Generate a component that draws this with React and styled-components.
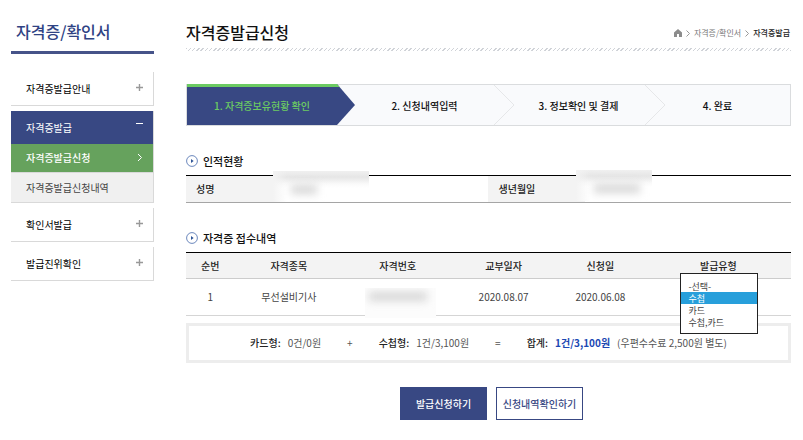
import styled, { createGlobalStyle } from 'styled-components';
import { useState } from "react"

const GlobalStyle = createGlobalStyle`
    * {
        box-sizing: border-box;
    }
    body {
        margin: 0;
        background: #fff;
        color: #222;
        font-family: "Noto Sans CJK KR", "Noto Sans", sans-serif;
        font-size: 10px;
        line-height: 16px;
    }
    button, select {
        font-family: inherit;
    }
    a {
        color: inherit;
        text-decoration: none;
    }
`

const Page = styled.div`
    display: flex;
    align-items: flex-start;
    gap: 32px;
    padding: 16px 12px 20px 11px;
`

const Sidebar = styled.aside`
    flex: 0 0 143px;
`

const SideTitle = styled.h2`
    margin: 0 0 18px;
    padding: 0 5px 5px;
    font-size: 16px;
    font-weight: 500;
    line-height: 30px;
    color: #2f4384;
    border-bottom: 3px solid #465389;
`

const Menu = styled.ul`
    display: grid;
    gap: 5px;
    margin: 0;
    padding: 0;
    list-style: none;
`

const MenuLink = styled.a`
    display: flex;
    align-items: center;
    justify-content: space-between;
    height: ${({ $active }) => $active ? '33px' : '34px'};
    padding: 0 10px 0 15px;
    color: ${({ $active }) => $active ? '#fff' : '#000'};
    background: ${({ $active }) => $active ? '#384883' : '#fff'};
    border-right: 1px solid #d9d9d9;
    border-bottom: ${({ $active }) => $active ? '0' : '1px solid #d9d9d9'};
`

const MenuIcon = styled.svg`
    display: block;
    width: 7px;
    height: 7px;
    margin-bottom: ${({ $high }) => $high ? '8px' : '2px'};
    fill: none;
    stroke: ${({ $color }) => $color};
    stroke-width: ${({ $thick }) => $thick ? '1.4' : '1'};
`

const SubLink = styled.a`
    display: flex;
    align-items: center;
    justify-content: space-between;
    height: ${({ $active }) => $active ? '28px' : '31px'};
    padding: 0 10px 0 15px;
    font-weight: ${({ $active }) => $active ? 500 : 400};
    color: ${({ $active }) => $active ? '#fff' : '#444'};
    background: ${({ $active }) => $active ? '#66a25d' : '#f0f0f0'};
    border: 0 solid #d9d9d9;
    border-width: ${({ $active }) => $active ? '0 1px 0 0' : '1px 1px 1px 0'};
`

const Main = styled.main`
    flex: 1;
    min-width: 0;
`

const Header = styled.header`
    display: flex;
    align-items: center;
    justify-content: space-between;
    height: 32px;
`

const Title = styled.h1`
    margin: 0;
    font-size: 16px;
    font-weight: 500;
    line-height: 32px;
    color: #111;
`

const Breadcrumb = styled.nav`
    display: flex;
    align-items: center;
    gap: 4px;
    padding: 2px 1px 0 0;
    font-size: 8px;
    color: #777;
    svg {
        display: block;
    }
    strong {
        font-weight: 500;
        color: #222;
    }
`

const Hatch = styled.div`
    height: 3px;
    margin-bottom: 33px;
    background: repeating-linear-gradient(135deg, #d0d3d8 0 1px, #fff 1px 3px);
`

const Steps = styled.ol`
    display: grid;
    grid-template-columns: 150fr 157fr 151fr 145fr;
    height: 42px;
    margin: 0 0 27px;
    padding: 0;
    list-style: none;
    background: #f9fafc;
    border: 1px solid #dadcde;
`

const Step = styled.li`
    position: relative;
    display: flex;
    align-items: center;
    justify-content: center;
    padding-top: 2px;
    padding-left: ${({ $inset }) => $inset ? '18px' : '0'};
    font-weight: 500;
    color: #111;
    ${({ $active }) => $active && `
        margin-top: -1px;
        color: #6ccb62;
        background: #384883;
        border-top: 3px solid #6ccb62;
        padding-top: 0;
    `}
`

const StepArrow = styled.svg`
    position: absolute;
    top: ${({ $active }) => $active ? '-3px' : '0'};
    left: 100%;
`

const SectionTitle = styled.h3`
    display: flex;
    align-items: center;
    gap: 5px;
    margin: 0 0 6px;
    font-size: 11px;
    font-weight: 500;
    line-height: 16px;
    color: #111;
`

const InfoTable = styled.table`
    width: 100%;
    table-layout: fixed;
    border-collapse: separate;
    border-spacing: 0;
    border-top: 1px solid #000;
    border-bottom: 1px solid #a5a5a5;
    margin-bottom: 27px;
    th, td {
        position: relative;
        height: 26px;
        padding: 0 10px;
        text-align: left;
    }
    th {
        font-weight: 500;
        color: #222;
        background: #f3f3f3;
    }
`

const ListTable = styled.table`
    width: 100%;
    table-layout: fixed;
    border-collapse: separate;
    border-spacing: 0;
    border-top: 1px solid #000;
    margin-bottom: 7px;
    text-align: center;
    th {
        height: 26px;
        padding: 0;
        font-weight: 500;
        color: #222;
        background: #f3f3f3;
        border-bottom: 1px solid #ccc;
    }
    td {
        position: relative;
        height: 37px;
        padding: 0;
        color: #444;
        border-bottom: 1px solid #d5d5d5;
    }
`

// masked personal data
const Mask = styled.span`
    position: absolute;
    top: ${({ $top }) => $top}px;
    left: ${({ $left }) => $left}px;
    width: ${({ $width }) => $width}px;
    height: ${({ $plain }) => $plain ? 30 : 31}px;
    background: ${({ $plain }) => $plain
        ? '#fcfcfc'
        : `linear-gradient(90deg, #f3f3f3, #f3f3f300 14px),
            linear-gradient(#f0f0f0, #e6e6e6 6px, #eee 9px, #fafafa 13px, #fff 17px)`};
    overflow: hidden;
    &::after {
        content: "";
        position: absolute;
        top: ${({ $plain }) => $plain ? 4 : 14}px;
        left: ${({ $blobLeft }) => $blobLeft}px;
        width: ${({ $blob }) => $blob}px;
        height: 9px;
        background: #d6d6d6;
        filter: blur(4px);
    }
`

const TypeSelect = styled.select`
    position: absolute;
    z-index: 1;
    top: -6px;
    left: 50%;
    width: 78px;
    height: 61px;
    margin: 0 0 0 -38px;
    padding: 6px 0 5px;
    font-size: 9px;
    color: #444;
    background: #fff;
    border: 1px solid #222;
    border-radius: 0;
    outline: 0;
    overflow: hidden;
    option {
        height: 12px;
        min-height: 12px;
        padding: 0 7px;
        line-height: 12px;
        text-align: left;
    }
    option:checked {
        background: linear-gradient(#279fdb, #279fdb);
        -webkit-text-fill-color: #fff;
    }
`

const Summary = styled.div`
    display: flex;
    align-items: center;
    justify-content: center;
    gap: 26px;
    height: 40px;
    margin-bottom: 24px;
    border: 3px solid #ededed;
    color: #555;
    white-space: nowrap;
`

const Amount = styled.span`
    display: flex;
    gap: 7px;
    b {
        font-weight: 500;
        color: #222;
    }
    strong {
        font-weight: 700;
        color: #1b48b3;
    }
`

const Actions = styled.div`
    display: flex;
    justify-content: center;
    gap: 9px;
    padding-left: 6px;
`

const Button = styled.button`
    width: 87px;
    height: 33px;
    padding: 0;
    font-size: 10px;
    font-weight: 500;
    line-height: 16px;
    color: ${({ $primary }) => $primary ? '#fff' : '#384883'};
    background: ${({ $primary }) => $primary ? '#384883' : '#fff'};
    border: 1px solid #384883;
    cursor: pointer;
`

const Plus = () => (
    <MenuIcon viewBox="0 0 7 7" $color="#999" $thick>
        <path d="M3.5 0v7M0 3.5h7" />
    </MenuIcon>
)

const Chevron = () => (
    <svg width="4" height="7" viewBox="0 0 4 7" fill="none" stroke="#999">
        <path d="M.5 .5l3 3-3 3" />
    </svg>
)

const Bullet = () => (
    <svg width="12" height="12" viewBox="0 0 12 12">
        <circle cx="6" cy="6" r="5.4" fill="none" stroke="#5b7ab5" strokeWidth=".9" />
        <path d="M5 4l2.6 2L5 8z" fill="#2f5597" />
    </svg>
)

const NextArrow = () => (
    <StepArrow width="21" height="40" viewBox="0 0 21 40" fill="none" stroke="#e6e7e9">
        <path d="M0 0l20 20L0 40" />
    </StepArrow>
)

const App = () => {
    const [tipo, setTipo] = useState('수첩');

    return (
        <>
            <GlobalStyle />
            <Page>
                <Sidebar>
                    <SideTitle>자격증/확인서</SideTitle>
                    <Menu>
                        <li><MenuLink href="#">자격증발급안내<Plus /></MenuLink></li>
                        <li>
                            <MenuLink href="#" $active>
                                자격증발급
                                <MenuIcon viewBox="0 0 7 7" $color="#fff" $high>
                                    <path d="M0 3.5h7" />
                                </MenuIcon>
                            </MenuLink>
                            <SubLink href="#" $active>
                                자격증발급신청
                                <MenuIcon viewBox="0 0 7 7" $color="#fff">
                                    <path d="M2 0l3.5 3.5L2 7" />
                                </MenuIcon>
                            </SubLink>
                            <SubLink href="#">자격증발급신청내역</SubLink>
                        </li>
                        <li><MenuLink href="#">확인서발급<Plus /></MenuLink></li>
                        <li><MenuLink href="#">발급진위확인<Plus /></MenuLink></li>
                    </Menu>
                </Sidebar>

                <Main>
                    <Header>
                        <Title>자격증발급신청</Title>
                        <Breadcrumb>
                            <svg width="8" height="8" viewBox="0 0 8 8">
                                <path d="M4 0l4 3.5V8H5V5H3v3H0V3.5z" fill="#8c8c8c" />
                            </svg>
                            <Chevron />
                            <a href="#">자격증/확인서</a>
                            <Chevron />
                            <strong>자격증발급</strong>
                        </Breadcrumb>
                    </Header>
                    <Hatch />

                    <Steps>
                        <Step $active>
                            1. 자격증보유현황 확인
                            <StepArrow $active width="18" height="41" viewBox="0 0 18 41">
                                <path d="M0 0l18 21L0 41z" fill="#384883" />
                                <path d="M0 0l2.6 3H0z" fill="#6ccb62" />
                            </StepArrow>
                        </Step>
                        <Step $inset>2. 신청내역입력<NextArrow /></Step>
                        <Step $inset>3. 정보확인 및 결제<NextArrow /></Step>
                        <Step>4. 완료</Step>
                    </Steps>

                    <SectionTitle><Bullet />인적현황</SectionTitle>
                    <InfoTable>
                        <colgroup>
                            <col width="16%" />
                            <col width="34%" />
                            <col width="16%" />
                            <col width="34%" />
                        </colgroup>
                        <tbody>
                            <tr>
                                <th scope="row">성명</th>
                                <td><Mask $top={-5} $left={-10} $width={96} $blobLeft={18} $blob={26} /></td>
                                <th scope="row">생년월일</th>
                                <td><Mask $top={-6} $left={-9} $width={76} $blobLeft={18} $blob={46} /></td>
                            </tr>
                        </tbody>
                    </InfoTable>

                    <SectionTitle><Bullet />자격증 접수내역</SectionTitle>
                    <ListTable>
                        <colgroup>
                            <col width="8%" />
                            <col width="18%" />
                            <col width="18%" />
                            <col width="17%" />
                            <col width="15%" />
                            <col width="24%" />
                        </colgroup>
                        <thead>
                            <tr>
                                <th>순번</th>
                                <th>자격종목</th>
                                <th>자격번호</th>
                                <th>교부일자</th>
                                <th>신청일</th>
                                <th>발급유형</th>
                            </tr>
                        </thead>
                        <tbody>
                            <tr>
                                <td>1</td>
                                <td>무선설비기사</td>
                                <td><Mask $plain $top={9} $left={22} $width={71} $blobLeft={4} $blob={58} /></td>
                                <td>2020.08.07</td>
                                <td>2020.06.08</td>
                                <td>
                                    <TypeSelect
                                        size={4}
                                        aria-label="발급유형"
                                        value={tipo}
                                        onChange={(e) => setTipo(e.target.value)}
                                    >
                                        <option value="">-선택-</option>
                                        <option value="수첩">수첩</option>
                                        <option value="카드">카드</option>
                                        <option value="수첩,카드">수첩,카드</option>
                                    </TypeSelect>
                                </td>
                            </tr>
                        </tbody>
                    </ListTable>

                    <Summary>
                        <Amount><b>카드형:</b> 0건/0원</Amount>
                        <span>+</span>
                        <Amount><b>수첩형:</b> 1건/3,100원</Amount>
                        <span>=</span>
                        <Amount><b>합계:</b> <strong>1건/3,100원</strong> (우편수수료 2,500원 별도)</Amount>
                    </Summary>

                    <Actions>
                        <Button type="button" $primary>발급신청하기</Button>
                        <Button type="button">신청내역확인하기</Button>
                    </Actions>
                </Main>
            </Page>
        </>
    )
}

export default App
